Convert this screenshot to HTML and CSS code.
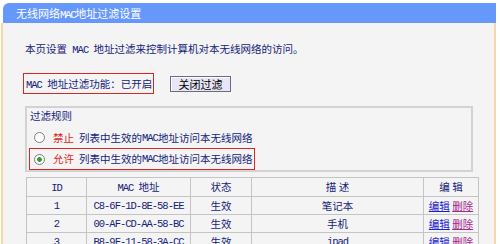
FILE: index.html
```html
<!DOCTYPE html>
<html lang="zh-CN">
<head>
<meta charset="utf-8">
<title>无线网络MAC地址过滤设置</title>
<link rel="stylesheet" href="styles.css">
</head>
<body>
<div class="page">
  <div class="title">无线网络<span class="en">MAC</span>地址过滤设置</div>
  <div class="content">
    <p class="intro">本页设置<span class="en"> MAC </span>地址过滤来控制计算机对本无线网络的访问。</p>
    <div class="status-row">
      <div class="status"><span class="en">MAC </span>地址过滤功能：已开启</div>
      <button class="btn" type="button">关闭过滤</button>
    </div>
    <div class="rules">
      <div class="rules-title">过滤规则</div>
      <div class="rule"><span class="radio"></span><span class="red">禁止</span><span class="sp"></span>列表中生效的<span class="en">MAC</span>地址访问本无线网络</div>
      <div class="rule selected"><span class="radio on"></span><span class="red">允许</span><span class="sp"></span>列表中生效的<span class="en">MAC</span>地址访问本无线网络</div>
    </div>
    <table class="list">
      <thead>
        <tr>
          <th class="c-id"><span class="en">ID</span></th>
          <th class="c-mac"><span class="en">MAC </span>地址</th>
          <th class="c-st">状态</th>
          <th class="c-desc">描 述</th>
          <th class="c-op">编 辑</th>
        </tr>
      </thead>
      <tbody>
        <tr>
          <td><span class="en">1</span></td>
          <td><span class="en">C8-6F-1D-8E-58-EE</span></td>
          <td>生效</td>
          <td>笔记本</td>
          <td><a class="edit" href="#">编辑</a> <a class="del" href="#">删除</a></td>
        </tr>
        <tr>
          <td><span class="en">2</span></td>
          <td><span class="en">00-AF-CD-AA-58-BC</span></td>
          <td>生效</td>
          <td>手机</td>
          <td><a class="edit" href="#">编辑</a> <a class="del" href="#">删除</a></td>
        </tr>
        <tr>
          <td><span class="en">3</span></td>
          <td><span class="en">B8-9F-11-58-3A-CC</span></td>
          <td>生效</td>
          <td><span class="en">ipad</span></td>
          <td><a class="edit" href="#">编辑</a> <a class="del" href="#">删除</a></td>
        </tr>
      </tbody>
    </table>
  </div>
</div>
</body>
</html>
```
FILE: styles.css
```css
body {
  margin: 0;
  background: #ffffff;
  font-family: "Noto Sans CJK SC", sans-serif;
  font-size: 10.5px;
  line-height: 14px;
  color: #14237a;
}

.en {
  font-family: "Liberation Mono", monospace;
  letter-spacing: -1px;
}

.page {
  margin: 3px 4px 0 1px;
}

.title {
  margin-left: 2px;
  height: 20px;
  line-height: 20px;
  padding-left: 13px;
  color: #ffffff;
  background: #6698fc;
  border-radius: 6px 0 0 0;
  font-size: 11px;
}

.title .en {
  letter-spacing: -1.5px;
}

.content {
  background: #f4f4f4;
  border-left: 2px solid #f8d6a8;
  border-right: 2px solid #f8d6a8;
  padding: 18px 0 30px 20px;
}

.intro {
  margin: 0 0 0 2px;
  line-height: 16px;
}

.status-row {
  display: flex;
  align-items: center;
  margin-top: 15px;
}

.status {
  flex: none;
  width: 127px;
  height: 19px;
  line-height: 19px;
  padding: 0 0 0 2px;
  white-space: nowrap;
  border: 1px solid #e02424;
}

.btn {
  margin: 0 0 0 16px;
  width: 61px;
  height: 16px;
  padding: 0;
  font-family: "Noto Sans CJK SC", sans-serif;
  font-size: 11px;
  line-height: 14px;
  color: #000000;
  background: #e6e6f6;
  border: 1px solid #6b6b7a;
  box-shadow: inset 1px 1px 0 #ffffff;
}

.rules {
  margin: 12px 0 0 2px;
  width: 448px;
  box-sizing: border-box;
  border: 2px solid #d2d2d2;
  padding: 0 0 0 2px;
}

.rules-title {
  padding-left: 1px;
  line-height: 16px;
  margin-bottom: 3px;
}

.rule {
  display: flex;
  align-items: center;
  width: fit-content;
  height: 21px;
  box-sizing: border-box;
  padding: 0 2px 0 4px;
  border: 1px solid transparent;
}

.rule.selected {
  border-color: #e02424;
  height: 22px;
}

.radio {
  width: 11px;
  height: 11px;
  box-sizing: border-box;
  border-radius: 50%;
  border: 1px solid #7c7c7c;
  background: #ffffff;
  margin-right: 8px;
}

.radio.on {
  background: radial-gradient(circle, #2f9a2f 0, #2f9a2f 2px, #ffffff 2.6px);
}

.red {
  color: #e0201c;
}

.sp {
  display: inline-block;
  width: 5px;
}

.list {
  margin: 5px 0 0 3px;
  width: 447px;
  table-layout: fixed;
  border-collapse: collapse;
}

.list th,
.list td {
  border: 1px solid #c4c4c4;
  padding: 0;
  text-align: center;
  font-weight: normal;
  line-height: 14px;
}

.list th {
  height: 18px;
}

.list td {
  height: 17px;
}

.c-id { width: 59px; }
.c-mac { width: 103px; }
.c-st { width: 60px; }
.c-desc { width: 171px; }
.c-op { width: 54px; }

.edit {
  color: #1c1cd0;
  text-decoration: underline;
}

.del {
  color: #a4288e;
  text-decoration: underline;
}
```
